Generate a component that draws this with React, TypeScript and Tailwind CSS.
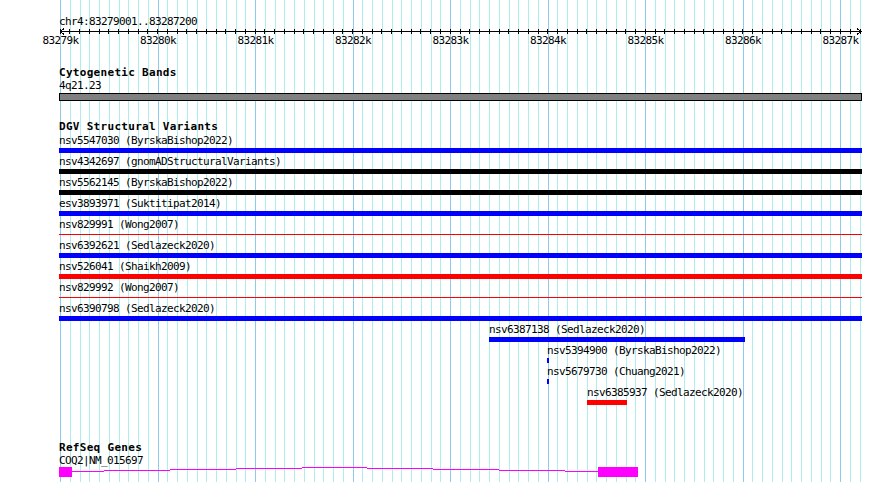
type Feature = {
  label: string;
  color: "blue" | "black" | "red";
  start: number;
  end: number;
  thin?: boolean;
};

// pixel extents of the features on the 890px canvas
const FULL = { start: 59, end: 862 };

const variants: Feature[] = [
  { label: "nsv5547030 (ByrskaBishop2022)", color: "blue", ...FULL },
  { label: "nsv4342697 (gnomADStructuralVariants)", color: "black", ...FULL },
  { label: "nsv5562145 (ByrskaBishop2022)", color: "black", ...FULL },
  { label: "esv3893971 (Suktitipat2014)", color: "blue", ...FULL },
  { label: "nsv829991 (Wong2007)", color: "red", thin: true, ...FULL },
  { label: "nsv6392621 (Sedlazeck2020)", color: "blue", ...FULL },
  { label: "nsv526041 (Shaikh2009)", color: "red", ...FULL },
  { label: "nsv829992 (Wong2007)", color: "red", thin: true, ...FULL },
  { label: "nsv6390798 (Sedlazeck2020)", color: "blue", ...FULL },
  { label: "nsv6387138 (Sedlazeck2020)", color: "blue", start: 489, end: 745 },
  { label: "nsv5394900 (ByrskaBishop2022)", color: "blue", start: 547, end: 549 },
  { label: "nsv5679730 (Chuang2021)", color: "blue", start: 547, end: 549 },
  { label: "nsv6385937 (Sedlazeck2020)", color: "red", start: 587, end: 627 },
];

const barColor = {
  blue: "bg-[#0000ff]",
  black: "bg-black",
  red: "bg-[#ff0000]",
};

const ticks = Array.from({ length: 83 }, (_, i) => i);
const kLabels = ["83279k", "83280k", "83281k", "83282k", "83283k", "83284k", "83285k", "83286k", "83287k"];

// small label text: 6px per character, like the browser's bitmap font
const small = "h-[12px] leading-[12px] text-[11px] tracking-[-0.62px] whitespace-nowrap";

function Grid() {
  return (
    <div className="absolute inset-y-0 left-[60px] w-[801px] flex justify-between">
      {ticks.map((i) => (
        <div key={i} className={i % 10 === 0 ? "w-px h-full bg-[#8ccbec]" : "w-px h-full bg-[#aeeeee]"} />
      ))}
    </div>
  );
}

function Axis() {
  return (
    <div className="flex flex-col">
      <div className={"ml-[59px] " + small}>chr4:83279001..83287200</div>
      <svg width="803" height="7" className="ml-[59px] block" shapeRendering="crispEdges">
        <rect x="1" y="3" width="802" height="1" fill="#000" />
        {ticks.map((i) => (
          <rect key={i} x={Math.floor(1 + (i * 800) / 82)} y="1" width="1" height="5" fill="#000" />
        ))}
        <path d="M5 0.5 L1.5 3.5 L5 6.5" fill="none" stroke="#000" strokeWidth="1" />
        <path d="M798 0.5 L801.5 3.5 L798 6.5" fill="none" stroke="#000" strokeWidth="1" />
      </svg>
      <div className={"ml-[60px] w-[781px] flex justify-between " + small}>
        {kLabels.map((k) => (
          <div key={k} className="w-px flex justify-center">
            <span>{k}</span>
          </div>
        ))}
      </div>
    </div>
  );
}

function TrackTitle({ children, className }: { children: React.ReactNode; className: string }) {
  return (
    <div
      className={
        "ml-[59px] h-[12px] leading-[12px] text-[11px] tracking-[0.3px] font-bold whitespace-nowrap " + className
      }
    >
      {children}
    </div>
  );
}

function VariantRow({ f }: { f: Feature }) {
  return (
    <div className="h-[21px] flex flex-col">
      <div className={small} style={{ marginLeft: f.start }}>
        {f.label}
      </div>
      {f.thin ? (
        <div className="mt-px h-[5px] flex items-center" style={{ marginLeft: f.start, width: f.end - f.start }}>
          <div className={"h-px w-full " + barColor[f.color]} />
        </div>
      ) : (
        <div className={"mt-px h-[5px] " + barColor[f.color]} style={{ marginLeft: f.start, width: f.end - f.start }} />
      )}
    </div>
  );
}

// COQ2 gene model: two exons joined by a shallow caret intron
const intron = [
  [13, 45, 4],
  [45, 111, 3],
  [111, 177, 2],
  [177, 243, 1],
  [243, 308, 0],
  [308, 374, 1],
  [374, 440, 2],
  [440, 506, 3],
  [506, 539, 4],
];

function Gene() {
  return (
    <svg width="580" height="10" className="ml-[59px] block" shapeRendering="crispEdges">
      <rect x="0" y="0" width="13" height="10" fill="#ff00ff" />
      {intron.map(([a, b, y]) => (
        <rect key={a} x={a} y={y} width={b - a} height="1" fill="#ff00ff" />
      ))}
      <rect x="539" y="0" width="40" height="10" fill="#ff00ff" />
    </svg>
  );
}

export default function App() {
  return (
    <div className="relative w-[890px] h-[482px] overflow-hidden bg-white text-black font-['DejaVu_Sans_Mono',monospace]">
      <Grid />
      <div className="relative flex flex-col pt-[16px]">
        <Axis />

        <TrackTitle className="mt-[20px]">Cytogenetic Bands</TrackTitle>
        <div className={"ml-[59px] mt-px " + small}>4q21.23</div>
        <div className="ml-[59px] mt-px w-[803px] h-[8px] border border-black bg-[#808080]" />

        <TrackTitle className="mt-[20px]">DGV Structural Variants</TrackTitle>
        <div className="mt-[2px] flex flex-col">
          {variants.map((f) => (
            <VariantRow key={f.label} f={f} />
          ))}
        </div>

        <TrackTitle className="mt-[34px]">RefSeq Genes</TrackTitle>
        <div className={"ml-[59px] mt-px " + small}>COQ2|NM_015697</div>
        <Gene />
      </div>
    </div>
  );
}
